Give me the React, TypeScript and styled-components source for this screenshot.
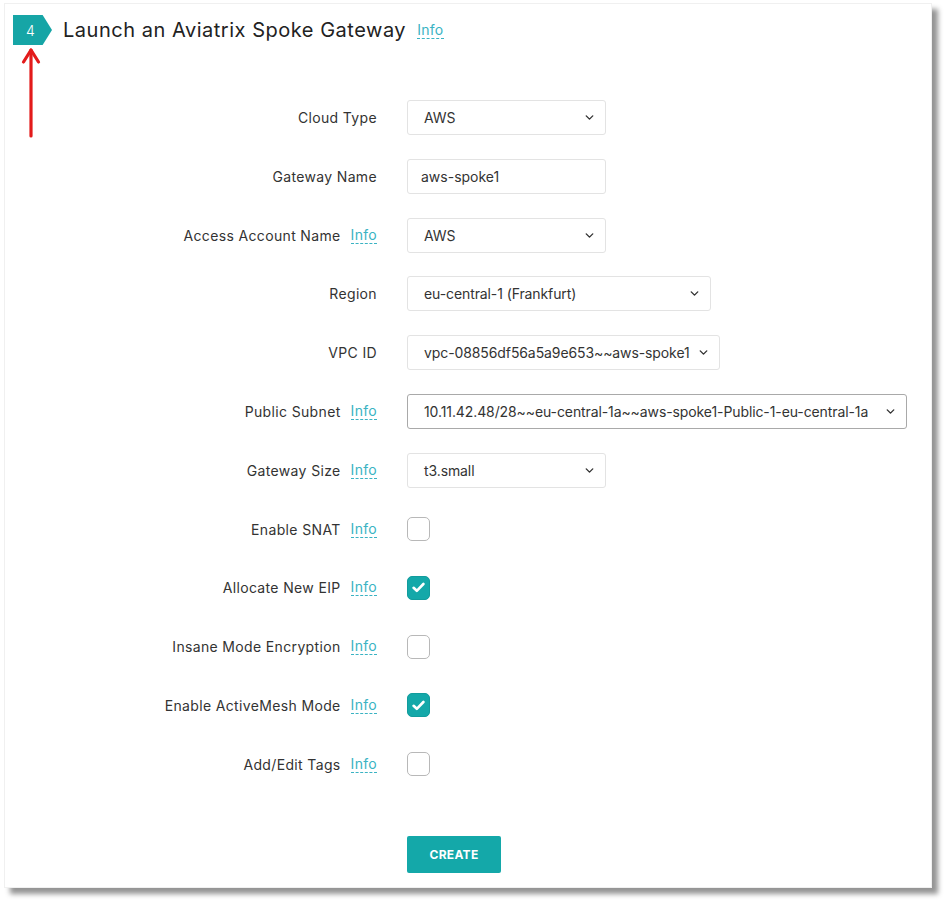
import styled, { createGlobalStyle } from "styled-components";
import { ChevronDown } from "lucide-react";

const GlobalStyle = createGlobalStyle`
  body {
    margin: 0;
    background: #ffffff;
    font-family: Inter, "Open Sans", sans-serif;
    color: #333333;
  }
`;

const Page = styled.div`
  padding: 3px 14px 16px 4px;
  position: relative;
`;

const Card = styled.div`
  position: relative;
  width: 928px;
  height: 885px;
  box-sizing: border-box;
  background: #ffffff;
  border: 1px solid #f0f0f0;
  box-shadow: 6px 6px 5px rgba(0, 0, 0, 0.42);
  padding: 11px 0 0 8px;
  display: flex;
  flex-direction: column;
`;

const Header = styled.div`
  display: flex;
  align-items: center;
  height: 30px;
`;

const Badge = styled.div`
  width: 39px;
  height: 30px;
  background: #16a5a6;
  color: #ffffff;
  font-size: 14px;
  font-weight: 300;
  display: flex;
  align-items: center;
  padding-left: 13px;
  box-sizing: border-box;
  clip-path: polygon(0 0, 76% 0, 100% 50%, 76% 100%, 0 100%);
`;

const Title = styled.h2`
  margin: 0 0 0 11px;
  font-size: 20px;
  font-weight: 400;
  color: #222222;
  letter-spacing: 0.52px;
`;

const InfoLink = styled.span<{ $gap?: number }>`
  color: #3ab3c3;
  font-size: 14px;
  letter-spacing: 0.3px;
  border-bottom: 1px dashed #3ab3c3;
  line-height: 16px;
  margin-left: ${(p) => p.$gap ?? 10}px;
`;

const Form = styled.div`
  display: flex;
  flex-direction: column;
  gap: 23.8px;
  margin-top: 55px;
`;

const Row = styled.div`
  display: flex;
  align-items: center;
  min-height: 35px;
`;

const LabelCell = styled.div`
  width: 364px;
  display: flex;
  justify-content: flex-end;
  align-items: center;
  margin-right: 30px;
  font-size: 14px;
  letter-spacing: 0.35px;
  color: #333333;
`;

const SelectBox = styled.div<{ $width: number; $focused?: boolean }>`
  width: ${(p) => p.$width}px;
  height: 35px;
  box-sizing: border-box;
  border: 1px solid ${(p) => (p.$focused ? "#a9a9a9" : "#e3e3e3")};
  border-radius: 3px;
  display: flex;
  align-items: center;
  justify-content: space-between;
  padding: 0 9px 0 16px;
  font-size: 14px;
  letter-spacing: -0.1px;
  color: #333333;
  white-space: nowrap;
`;

const TextInput = styled.div`
  width: 199px;
  height: 35px;
  box-sizing: border-box;
  border: 1px solid #e3e3e3;
  border-radius: 3px;
  display: flex;
  align-items: center;
  padding-left: 13px;
  font-size: 14px;
  color: #333333;
`;

const CheckBox = styled.div<{ $checked?: boolean }>`
  width: 23px;
  height: 24px;
  box-sizing: border-box;
  border-radius: 5px;
  border: 1px solid ${(p) => (p.$checked ? "#129c9d" : "#b8b8b8")};
  background: ${(p) => (p.$checked ? "#14a8a9" : "#ffffff")};
  display: flex;
  align-items: center;
  justify-content: center;
`;

const Actions = styled.div`
  margin-top: 54px;
  padding-left: 394px;
`;

const CreateButton = styled.button`
  width: 94px;
  height: 37px;
  border: none;
  border-radius: 2px;
  background: #14a8a9;
  color: #ffffff;
  font-family: Inter, "Open Sans", sans-serif;
  font-weight: 700;
  font-size: 12px;
  letter-spacing: 0.3px;
`;

const Annotation = styled.svg`
  position: absolute;
  left: 20px;
  top: 46px;
`;

type Field =
  | { kind: "select"; label: string; value: string; width: number; info?: boolean; focused?: boolean }
  | { kind: "text"; label: string; value: string; info?: boolean }
  | { kind: "check"; label: string; checked: boolean; info?: boolean };

const fields: Field[] = [
  { kind: "select", label: "Cloud Type", value: "AWS", width: 199 },
  { kind: "text", label: "Gateway Name", value: "aws-spoke1" },
  { kind: "select", label: "Access Account Name", value: "AWS", width: 199, info: true },
  { kind: "select", label: "Region", value: "eu-central-1 (Frankfurt)", width: 304 },
  { kind: "select", label: "VPC ID", value: "vpc-08856df56a5a9e653~~aws-spoke1", width: 313 },
  {
    kind: "select",
    label: "Public Subnet",
    value: "10.11.42.48/28~~eu-central-1a~~aws-spoke1-Public-1-eu-central-1a",
    width: 500,
    info: true,
    focused: true,
  },
  { kind: "select", label: "Gateway Size", value: "t3.small", width: 199, info: true },
  { kind: "check", label: "Enable SNAT", checked: false, info: true },
  { kind: "check", label: "Allocate New EIP", checked: true, info: true },
  { kind: "check", label: "Insane Mode Encryption", checked: false, info: true },
  { kind: "check", label: "Enable ActiveMesh Mode", checked: true, info: true },
  { kind: "check", label: "Add/Edit Tags", checked: false, info: true },
];

const Check = () => (
  <svg width="13" height="11" viewBox="0 0 13 11">
    <path d="M1.6 5.8 L4.8 8.8 L11.4 2" fill="none" stroke="#fff" strokeWidth="2.6" strokeLinecap="round" strokeLinejoin="round" />
  </svg>
);

const renderControl = (f: Field) => {
  if (f.kind === "select") {
    return (
      <SelectBox $width={f.width} $focused={f.focused}>
        <span>{f.value}</span>
        <ChevronDown size={13} strokeWidth={2.6} color="#333" />
      </SelectBox>
    );
  }
  if (f.kind === "text") return <TextInput>{f.value}</TextInput>;
  return <CheckBox $checked={f.checked}>{f.checked && <Check />}</CheckBox>;
};

const App = () => {
  return (
    <Page>
      <GlobalStyle />
      <Card>
        <Header>
          <Badge>4</Badge>
          <Title>Launch an Aviatrix Spoke Gateway</Title>
          <InfoLink $gap={11}>Info</InfoLink>
        </Header>
        <Form>
          {fields.map((f) => (
            <Row key={f.label}>
              <LabelCell>
                {f.label}
                {f.info && <InfoLink>Info</InfoLink>}
              </LabelCell>
              {renderControl(f)}
            </Row>
          ))}
        </Form>
        <Actions>
          <CreateButton>CREATE</CreateButton>
        </Actions>
      </Card>
      <Annotation width="22" height="92" viewBox="0 0 22 92">
        <path d="M11 4 L11 90" stroke="#e31b1b" strokeWidth="3.2" strokeLinecap="round" />
        <path d="M3.5 16 L11 4 L18.5 16" fill="none" stroke="#e31b1b" strokeWidth="3.2" strokeLinecap="round" strokeLinejoin="round" />
      </Annotation>
    </Page>
  );
};

export default App;
